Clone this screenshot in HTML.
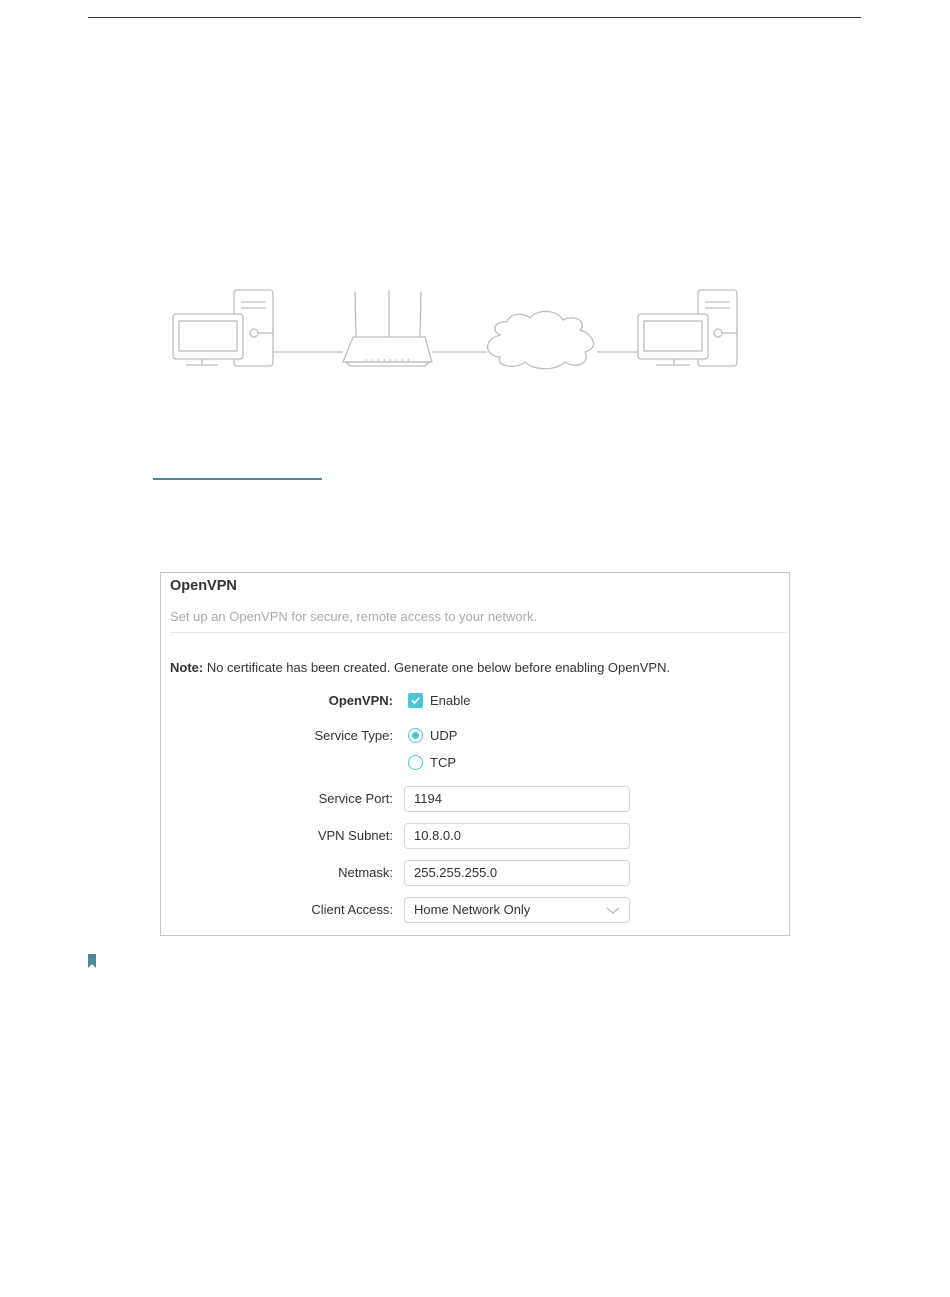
<!DOCTYPE html>
<html><head><meta charset="utf-8"><style>
body{margin:0;background:#fff;font-family:"Liberation Sans",Arial,sans-serif;}
.a{position:absolute;white-space:nowrap}
.lbl{position:absolute;right:557px;font-size:13px;color:#333;}
.inp{position:absolute;left:404px;border:1px solid #d6d6d6;border-radius:4px;font-size:13px;color:#333;line-height:24px;padding-left:9px;box-sizing:border-box;width:226px;height:26px}
</style></head><body>
<div style="position:relative;width:950px;height:1297px;overflow:hidden">
<div class="a" style="left:88px;top:17px;width:773px;height:1px;background:#333"></div>
<svg class="a" style="left:160px;top:280px" width="600" height="100" viewBox="0 0 600 100" fill="none" stroke="#bdbdbd" stroke-width="1.3">
<rect x="74" y="10" width="39" height="76" rx="3"/><line x1="81" y1="22" x2="106" y2="22"/><line x1="81" y1="28" x2="106" y2="28"/>
<circle cx="94" cy="53" r="4"/><line x1="98" y1="53" x2="113" y2="53"/>
<rect x="13" y="34" width="70" height="45" rx="3" fill="#fff"/><rect x="19" y="41" width="58" height="30"/>
<line x1="42" y1="79" x2="42" y2="85"/><line x1="26" y1="85" x2="58" y2="85"/>
<line x1="113" y1="72" x2="183" y2="72"/>
<path d="M183 82 L193 57 L227 57 L237 57 L265 57 L272 82 Z"/><path d="M186 82 L269 82 L265 86 L190 86Z"/>
<line x1="195" y1="12" x2="196" y2="57"/><line x1="229" y1="10" x2="229" y2="57"/><line x1="261" y1="12" x2="260" y2="57"/>
<line x1="272" y1="72" x2="327" y2="72"/>
<path d="M340 55 C330 50 336 40 347 42 C350 32 365 33 370 38 C378 28 398 30 403 40 C415 34 428 42 420 50 C433 54 440 68 425 72 C430 82 418 90 405 82 C395 92 372 90 365 82 C355 90 335 86 340 77 C325 76 322 60 340 55Z" fill="#fff"/>
<line x1="437" y1="72" x2="478" y2="72"/>
<rect x="538" y="10" width="39" height="76" rx="3"/><line x1="545" y1="22" x2="570" y2="22"/><line x1="545" y1="28" x2="570" y2="28"/>
<circle cx="558" cy="53" r="4"/><line x1="562" y1="53" x2="577" y2="53"/>
<rect x="478" y="34" width="70" height="45" rx="3" fill="#fff"/><rect x="484" y="41" width="58" height="30"/>
<line x1="514" y1="79" x2="514" y2="85"/><line x1="496" y1="85" x2="530" y2="85"/>
<g stroke="#888" stroke-width="1"><line x1="206" y1="80" x2="207" y2="80"/><line x1="212" y1="80" x2="213" y2="80"/><line x1="218" y1="80" x2="219" y2="80"/><line x1="224" y1="80" x2="225" y2="80"/><line x1="230" y1="80" x2="231" y2="80"/><line x1="236" y1="80" x2="237" y2="80"/><line x1="242" y1="80" x2="243" y2="80"/><line x1="248" y1="80" x2="249" y2="80"/></g>
</svg>
<div class="a" style="left:153px;top:478px;width:169px;height:1.5px;background:#4a8a99"></div>
<div class="a" style="left:160px;top:572px;width:628px;height:362px;border:1px solid #c8c8c8"></div>
<div class="a" style="left:170px;top:578px;font-size:14.5px;font-weight:bold;color:#333">OpenVPN</div>
<div class="a" style="left:170px;top:609px;font-size:13px;color:#aaa">Set up an OpenVPN for secure, remote access to your network.</div>
<div class="a" style="left:170px;top:632px;width:617px;height:1px;background:#e6e6e6"></div>
<div class="a" style="left:170px;top:660px;font-size:13px;color:#333"><b>Note:</b> No certificate has been created. Generate one below before enabling OpenVPN.</div>
<div class="lbl" style="top:693px;font-weight:bold">OpenVPN:</div>
<div class="a" style="left:408px;top:693px;width:15px;height:15px;background:#4bc6d6;border-radius:2px"><svg width="15" height="15"><path d="M4 7.5 L6.5 10 L11 5" stroke="#fff" stroke-width="1.6" fill="none"/></svg></div>
<div class="a" style="left:430px;top:693px;font-size:13px;color:#333">Enable</div>
<div class="lbl" style="top:728px">Service Type:</div>
<div class="a" style="left:408px;top:728px;width:13px;height:13px;border:1px solid #4bc6d6;border-radius:50%"><div style="position:absolute;left:3px;top:3px;width:7px;height:7px;border-radius:50%;background:#4bc6d6"></div></div>
<div class="a" style="left:430px;top:728px;font-size:13px;color:#333">UDP</div>
<div class="a" style="left:408px;top:755px;width:13px;height:13px;border:1px solid #4bc6d6;border-radius:50%"></div>
<div class="a" style="left:430px;top:755px;font-size:13px;color:#333">TCP</div>
<div class="lbl" style="top:791px">Service Port:</div><div class="inp" style="top:786px">1194</div>
<div class="lbl" style="top:828px">VPN Subnet:</div><div class="inp" style="top:823px">10.8.0.0</div>
<div class="lbl" style="top:865px">Netmask:</div><div class="inp" style="top:860px">255.255.255.0</div>
<div class="lbl" style="top:902px">Client Access:</div><div class="inp" style="top:897px">Home Network Only<svg style="position:absolute;right:9px;top:8px" width="14" height="9"><path d="M1 2 L7 7 L13 2" stroke="#bbb" stroke-width="1.3" fill="none"/></svg></div>
<svg class="a" style="left:88px;top:954px" width="8" height="14"><path d="M0 0 H8 V14 L4 10 L0 14Z" fill="#4a8a99"/></svg>
</div>
</body></html>
